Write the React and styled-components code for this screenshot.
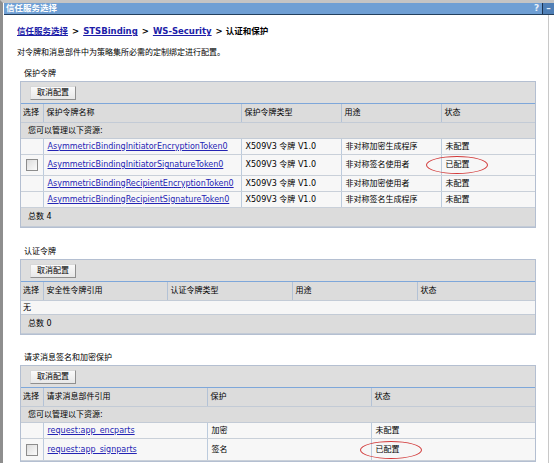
import React from 'react'
import styled, { createGlobalStyle } from 'styled-components'

const GlobalStyle = createGlobalStyle`
  html, body {
    margin: 0;
    padding: 0;
    background: #fff;
  }
  body {
    font-family: "DejaVu Sans", "Noto Sans CJK SC", sans-serif;
    font-size: 8px;
    line-height: 1;
    color: #000;
  }
`

const Frame = styled.div`
  width: 554px;
  height: 463px;
  box-sizing: border-box;
  overflow: hidden;
  border-top: 3px solid #c4c4c4;
  border-left: 3px solid #8e8e8e;
  display: flex;
  flex-direction: column;
`

const TitleBar = styled.div`
  height: 11px;
  flex: none;
  margin-left: 1px;
  background: #6f9fd4;
  border-bottom: 1px solid #24405e;
  display: flex;
  align-items: stretch;
  justify-content: space-between;
`

const TitleText = styled.span`
  color: #fff;
  font-weight: bold;
  font-size: 8.5px;
  padding-left: 2px;
  display: flex;
  align-items: center;
`

const TitleTools = styled.div`
  display: flex;
`

const ToolBtn = styled.span`
  width: 11px;
  display: flex;
  align-items: center;
  justify-content: center;
  color: #e8f0fa;
  font-weight: bold;
  font-size: 9px;
  background: ${p => (p.$dark ? '#4f7fb6' : 'transparent')};
  border-left: ${p => (p.$dark ? '1px solid #1d3350' : 'none')};
`

const Body = styled.div`
  flex: 1;
  width: 546px;
  box-sizing: border-box;
  border-right: 1px solid #c8c8c8;
  padding: 11px 0 0 14px;
`

const Crumbs = styled.div`
  height: 11px;
  display: flex;
  align-items: center;
  font-size: 8.5px;
  font-weight: bold;
  gap: 4px;
`

const CrumbLink = styled.a`
  color: #1c1ca8;
  text-decoration: underline;
`

const Desc = styled.div`
  margin-top: 10px;
  height: 11px;
  display: flex;
  align-items: center;
`

const SectionLabel = styled.div`
  margin-top: ${p => p.$top}px;
  padding-left: 7px;
  height: 11px;
  display: flex;
  align-items: center;
  margin-bottom: 2px;
`

const Panel = styled.div`
  margin-left: 3px;
  width: 516px;
  box-sizing: border-box;
  border: 1px solid #b4bfd1;
  background: #dedede;
`

const Toolbar = styled.div`
  height: 22px;
  box-sizing: border-box;
  padding-left: 9px;
  display: flex;
  align-items: center;
  border-bottom: 1px solid #7ea7da;
`

const Button = styled.button`
  height: 14px;
  padding: 0 6px;
  margin: 0;
  font-family: inherit;
  font-size: 8px;
  line-height: 1;
  color: #000;
  background: linear-gradient(#fafafa, #e8e8e8);
  border: 1px solid #8f8f8f;
  border-top-color: #d8d8d8;
  border-left-color: #d8d8d8;
`

const Grid = styled.table`
  width: 100%;
  border-collapse: collapse;
  table-layout: fixed;
`

const HeadCell = styled.th`
  height: 18px;
  padding: 0 3px;
  text-align: left;
  font-weight: normal;
  white-space: nowrap;
  overflow: hidden;
  background: #dcdcdc;
  border-left: 1px solid #f4f4f4;
  border-right: 1px solid #b3c2d6;
  border-bottom: 1px solid #c3cbd6;
  &:first-child {
    border-left: none;
    padding: 0 2px;
  }
  &:last-child {
    border-right: none;
  }
`

const NoteCell = styled.td`
  height: ${p => p.$h || 15}px;
  padding: 0 ${p => p.$pad ?? 7}px;
  background: ${p => p.$bg || '#dcdcdc'};
  border-bottom: 1px solid #c3cbd6;
`

const Cell = styled.td`
  height: ${p => p.$h || 15}px;
  padding: 0 4px;
  background: #f7f7f7;
  border-right: 1px solid #bccbdd;
  border-bottom: 1px solid #c9d0d9;
  white-space: nowrap;
  overflow: visible;
  position: relative;
  &:last-child {
    border-right: none;
  }
`

const Link = styled.a`
  color: #2424b4;
  text-decoration: underline;
`

const Check = styled.span`
  display: block;
  width: 10px;
  height: 10px;
  margin: 0 auto;
  border: 1px solid #8c8c8c;
  background: linear-gradient(135deg, #dcdcdc, #fbfbfb);
`

const Mark = styled.span`
  position: absolute;
  left: ${p => p.$left}px;
  top: 50%;
  transform: translateY(-50%);
  width: 60px;
  height: 16px;
  border: 1px solid #d23a3a;
  border-radius: 50%;
  pointer-events: none;
`

const Total = ({ span, n }) => (
  <tr>
    <NoteCell colSpan={span} $h={18}>总数 {n}</NoteCell>
  </tr>
)

const Status = ({ text, mark, left }) => (
  <Cell>
    {text}
    {mark && <Mark $left={left} />}
  </Cell>
)

const tokens = [
  { name: 'AsymmetricBindingInitiatorEncryptionToken0', use: '非对称加密生成程序', status: '未配置' },
  { name: 'AsymmetricBindingInitiatorSignatureToken0', use: '非对称签名使用者', status: '已配置', check: true },
  { name: 'AsymmetricBindingRecipientEncryptionToken0', use: '非对称加密使用者', status: '未配置' },
  { name: 'AsymmetricBindingRecipientSignatureToken0', use: '非对称签名生成程序', status: '未配置' },
]

const parts = [
  { name: 'request:app_encparts', prot: '加密', status: '未配置' },
  { name: 'request:app_signparts', prot: '签名', status: '已配置', check: true },
]

const Cols = ({ widths }) => (
  <colgroup>
    {widths.map((w, i) => (
      <col key={i} style={{ width: w }} />
    ))}
  </colgroup>
)

export default function App() {
  return (
    <>
      <GlobalStyle />
      <Frame>
        <TitleBar>
          <TitleText>信任服务选择</TitleText>
          <TitleTools>
            <ToolBtn>?</ToolBtn>
            <ToolBtn $dark>–</ToolBtn>
          </TitleTools>
        </TitleBar>
        <Body>
          <Crumbs>
            <CrumbLink>信任服务选择</CrumbLink>
            <span>&gt;</span>
            <CrumbLink>STSBinding</CrumbLink>
            <span>&gt;</span>
            <CrumbLink>WS-Security</CrumbLink>
            <span>&gt; 认证和保护</span>
          </Crumbs>
          <Desc>对令牌和消息部件中为策略集所必需的定制绑定进行配置。</Desc>

          <SectionLabel $top={10}>保护令牌</SectionLabel>
          <Panel>
            <Toolbar>
              <Button>取消配置</Button>
            </Toolbar>
            <Grid>
              <Cols widths={[22, 198, 100, 100, 94]} />
              <thead>
                <tr>
                  <HeadCell>选择</HeadCell>
                  <HeadCell>保护令牌名称</HeadCell>
                  <HeadCell>保护令牌类型</HeadCell>
                  <HeadCell>用途</HeadCell>
                  <HeadCell>状态</HeadCell>
                </tr>
              </thead>
              <tbody>
                <tr>
                  <NoteCell colSpan={5}>您可以管理以下资源:</NoteCell>
                </tr>
                {tokens.map(t => (
                  <tr key={t.name}>
                    <Cell $h={t.check ? 20 : 15}>{t.check && <Check />}</Cell>
                    <Cell><Link>{t.name}</Link></Cell>
                    <Cell>X509V3 令牌 V1.0</Cell>
                    <Cell>{t.use}</Cell>
                    <Status text={t.status} mark={t.check} left={-16} />
                  </tr>
                ))}
                <Total span={5} n={4} />
              </tbody>
            </Grid>
          </Panel>

          <SectionLabel $top={18}>认证令牌</SectionLabel>
          <Panel>
            <Toolbar>
              <Button>取消配置</Button>
            </Toolbar>
            <Grid>
              <Cols widths={[22, 124, 125, 125, 118]} />
              <thead>
                <tr>
                  <HeadCell>选择</HeadCell>
                  <HeadCell>安全性令牌引用</HeadCell>
                  <HeadCell>认证令牌类型</HeadCell>
                  <HeadCell>用途</HeadCell>
                  <HeadCell>状态</HeadCell>
                </tr>
              </thead>
              <tbody>
                <tr>
                  <NoteCell colSpan={5} $h={13} $pad={2} $bg="#f6f6f6">无</NoteCell>
                </tr>
                <Total span={5} n={0} />
              </tbody>
            </Grid>
          </Panel>

          <SectionLabel $top={17}>请求消息签名和加密保护</SectionLabel>
          <Panel>
            <Toolbar>
              <Button>取消配置</Button>
            </Toolbar>
            <Grid>
              <Cols widths={[22, 164, 164, 164]} />
              <thead>
                <tr>
                  <HeadCell>选择</HeadCell>
                  <HeadCell>请求消息部件引用</HeadCell>
                  <HeadCell>保护</HeadCell>
                  <HeadCell>状态</HeadCell>
                </tr>
              </thead>
              <tbody>
                <tr>
                  <NoteCell colSpan={4}>您可以管理以下资源:</NoteCell>
                </tr>
                {parts.map(p => (
                  <tr key={p.name}>
                    <Cell $h={p.check ? 21 : 15}>{p.check && <Check />}</Cell>
                    <Cell><Link>{p.name}</Link></Cell>
                    <Cell>{p.prot}</Cell>
                    <Status text={p.status} mark={p.check} left={-12} />
                  </tr>
                ))}
              </tbody>
            </Grid>
          </Panel>
        </Body>
      </Frame>
    </>
  )
}
